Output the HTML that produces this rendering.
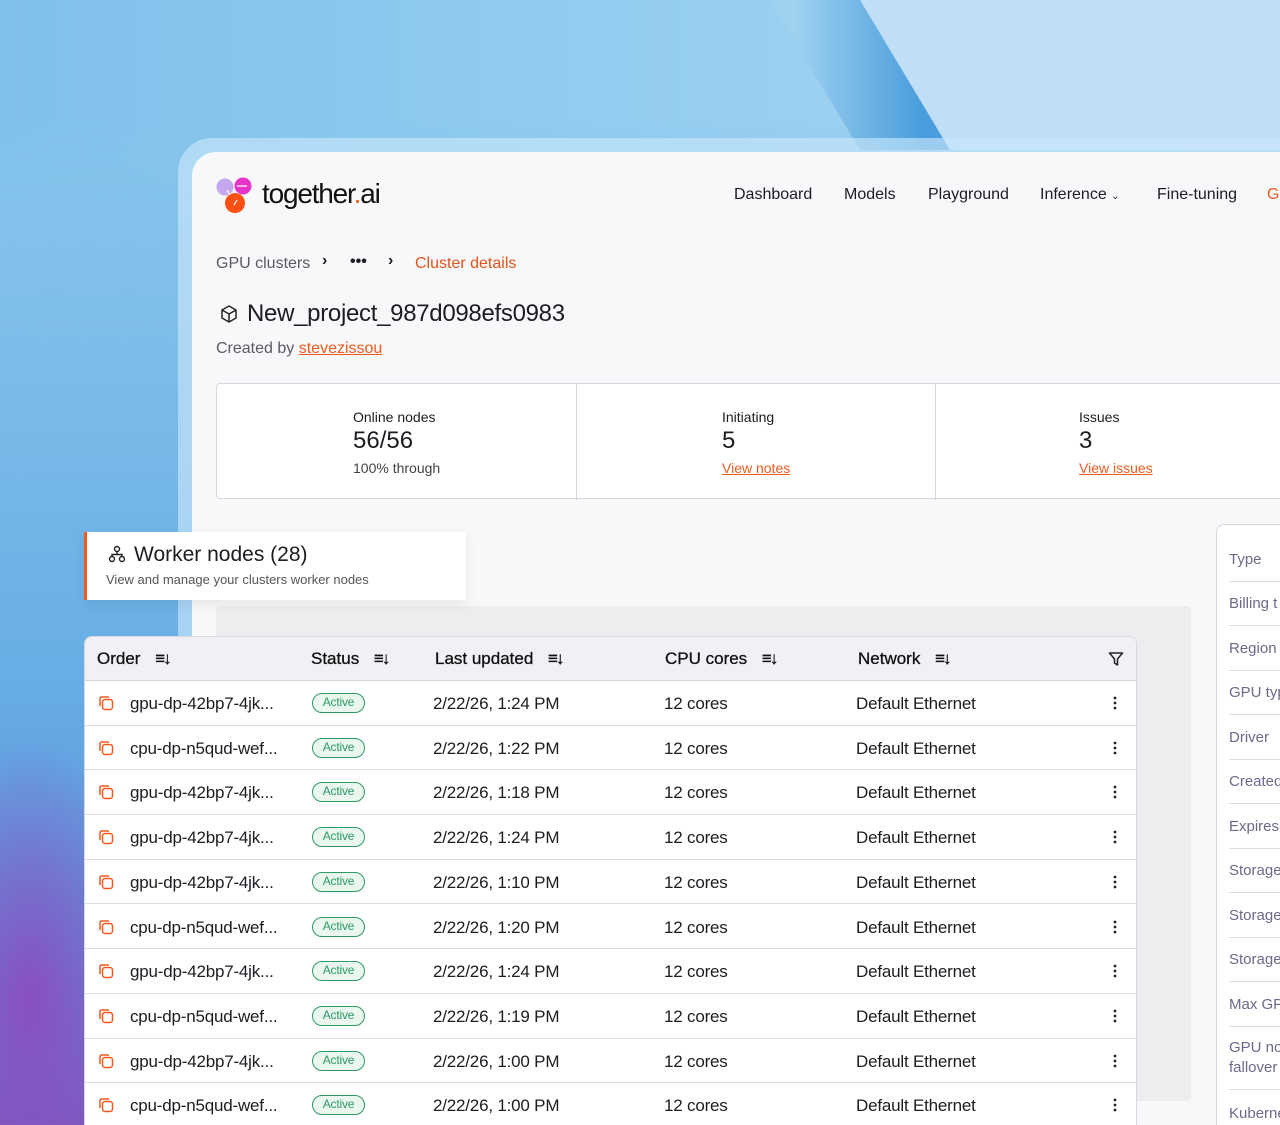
<!DOCTYPE html>
<html style="width:1280px;height:1125px;overflow:hidden"><head><meta charset="utf-8"><style>
*{box-sizing:border-box;margin:0;padding:0}
body{width:1280px;height:1125px;overflow:hidden;position:relative;font-family:"Liberation Sans",sans-serif;color:#1c1c22;
background:linear-gradient(180deg,#8ccbee 0%,#7dbde9 30%,#67aee6 60%,#5b8fd8 85%,#7a5cc0 100%);}
.bg2{position:absolute;left:0;top:0;width:1280px;height:1125px;background:radial-gradient(ellipse 120px 260px at 30px 1000px,#8a4fc0 0%,rgba(138,79,192,0) 100%);}
.sky{position:absolute;left:0;top:0;width:1280px;height:200px;background:linear-gradient(90deg,#7fc0ea 0%,#95cdef 50%,#aad6f2 100%);-webkit-mask-image:linear-gradient(180deg,#000 60%,transparent 100%);mask-image:linear-gradient(180deg,#000 60%,transparent 100%)}
.right{position:absolute;left:0;top:0;width:1280px;height:150px;background:#c0dff6;clip-path:polygon(860px 0,1280px 0,1280px 150px,950px 150px)}
.band{position:absolute;left:0;top:0;width:1280px;height:150px;background:linear-gradient(90deg,#9fd2f0 62%,#4a9ddc 72%);clip-path:polygon(770px 0,860px 0,950px 150px,860px 150px)}
.frame{position:absolute;left:178px;top:138px;width:1102px;height:987px;border-radius:34px 0 0 0;background:rgba(200,230,250,.65)}
.panel{position:absolute;left:192px;top:152px;width:1088px;height:973px;border-radius:24px 0 0 0;background:#f7f8fa}
.a{position:absolute;white-space:nowrap}
.nav{font-size:16px;top:186px;color:#1c1c22}
.stats{position:absolute;left:216px;top:383px;width:1100px;height:116px;border:1px solid #d6d8de;background:#fff;border-radius:4px}
.stats .d{position:absolute;top:0;width:1px;height:116px;background:#d6d8de}
.gray{position:absolute;left:216px;top:606px;width:975px;height:495px;background:#ededef;border-radius:4px}
.card{position:absolute;left:84px;top:532px;width:382px;height:68px;background:#fff;border-left:3px solid #f05a1e;box-shadow:0 4px 12px rgba(0,0,0,.08)}
.table{position:absolute;left:84px;top:636px;width:1053px;height:489px;background:#fff;border:1px solid #d6d8de;border-bottom:none;border-radius:8px 8px 0 0;overflow:hidden}
.th{position:absolute;top:0;left:0;width:100%;height:44px;background:#eff1f5;border-bottom:1px solid #d6d8de}
.th span{position:absolute;top:12px;font-size:17px;color:#111;-webkit-text-stroke:.3px #111}
.row{position:absolute;left:0;width:100%;height:44.7px;border-bottom:1.5px solid #dcdee4;font-size:17px;letter-spacing:-.2px}
.row span{position:absolute;top:13px}
.badge{position:absolute;left:227px;top:12px;width:53px;height:20px;border:1.5px solid #2e9a64;border-radius:10px;background:#e9f7ef;color:#2e9a64;font-size:12px;text-align:center;line-height:17px}
.side{position:absolute;left:1216px;top:524px;width:80px;height:620px;background:#fff;border:1px solid #d6d8de;border-radius:8px}
.side div{position:absolute;left:12px;width:70px;font-size:15px;color:#6b6a8a;border-bottom:1.5px solid #dcdee4;height:44.5px;padding-top:14px}
.so{font-size:13px;font-weight:bold;letter-spacing:-2px}
</style></head><body>
<div class="sky"></div><div class="right"></div><div class="band"></div><div class="bg2"></div>
<div class="frame"></div><div class="panel"></div>
<svg class="a" style="left:215px;top:176px" width="42" height="38" viewBox="0 0 42 38"><circle cx="10" cy="11" r="8.5" fill="#c4a7ee"/><circle cx="28" cy="10" r="8.5" fill="#e635c8"/><circle cx="20" cy="27" r="10" fill="#fb4f14"/><path d="M22 10h10M12 14l3 5M22 24l-3 5" stroke="#fff" stroke-width="1.2"/></svg>
<div class="a" style="left:262px;top:178px;font-size:28px;letter-spacing:-1.2px;color:#111">together<span style="color:#f05a1e">.</span>ai</div>
<div class="a nav" style="left:734px">Dashboard</div>
<div class="a nav" style="left:844px">Models</div>
<div class="a nav" style="left:928px">Playground</div>
<div class="a nav" style="left:1040px">Inference <span style="font-size:10px">⌄</span></div>
<div class="a nav" style="left:1157px">Fine-tuning</div>
<div class="a nav" style="left:1267px;color:#f05a1e">G</div>
<div class="a" style="left:216px;top:255px;font-size:16px;color:#5a5a66">GPU clusters</div>
<div class="a" style="left:322px;top:252px;font-size:16px;font-weight:bold">›</div>
<div class="a" style="left:350px;top:253px;font-size:16px;font-weight:bold">•••</div>
<div class="a" style="left:388px;top:252px;font-size:16px;font-weight:bold">›</div>
<div class="a" style="left:415px;top:255px;font-size:16px;color:#e2541a">Cluster details</div>
<svg class="a" style="left:219px;top:304px" width="20" height="20" viewBox="0 0 20 20" fill="none" stroke="#222" stroke-width="1.5" stroke-linejoin="round"><path d="M10 2l7 4v8l-7 4-7-4V6z M3 6l7 4 7-4 M10 10v8"/></svg>
<div class="a" style="left:247px;top:300px;font-size:24px;letter-spacing:-.3px">New_project_987d098efs0983</div>
<div class="a" style="left:216px;top:340px;font-size:16px;color:#5a5a66">Created by <span style="color:#f05a1e;text-decoration:underline">stevezissou</span></div>
<div class="stats"><div class="d" style="left:359px"></div><div class="d" style="left:718px"></div>
<div class="a" style="left:136px;top:25px;font-size:14px">Online nodes</div>
<div class="a" style="left:136px;top:43px;font-size:24px">56/56</div>
<div class="a" style="left:136px;top:76px;font-size:14px;color:#444">100% through</div>
<div class="a" style="left:505px;top:25px;font-size:14px">Initiating</div>
<div class="a" style="left:505px;top:43px;font-size:24px">5</div>
<div class="a" style="left:505px;top:76px;font-size:14px;color:#f05a1e;text-decoration:underline">View notes</div>
<div class="a" style="left:862px;top:25px;font-size:14px">Issues</div>
<div class="a" style="left:862px;top:43px;font-size:24px">3</div>
<div class="a" style="left:862px;top:76px;font-size:14px;color:#f05a1e;text-decoration:underline">View issues</div>
</div>
<div class="gray"></div>
<div class="side">
<div style="top:12px">Type</div><div style="top:56px">Billing t</div><div style="top:101px">Region</div><div style="top:145px">GPU typ</div><div style="top:190px">Driver</div><div style="top:234px">Created</div><div style="top:279px">Expires</div><div style="top:323px">Storage</div><div style="top:368px">Storage</div><div style="top:412px">Storage</div><div style="top:457px">Max GP</div><div style="top:501px;height:64px;line-height:20px;padding-top:12px">GPU no fallover</div><div style="top:566px">Kuberne</div>
</div>
<div class="card">
<svg class="a" style="left:21px;top:13px" width="18" height="18" viewBox="0 0 18 18" fill="none" stroke="#222" stroke-width="1.4"><circle cx="9" cy="4" r="2.5"/><circle cx="4" cy="14" r="2.5"/><circle cx="14" cy="14" r="2.5"/><path d="M9 6.5v3M4 11.5V9.5h10v2"/></svg>
<div class="a" style="left:47px;top:11px;font-size:21px">Worker nodes (28)</div>
<div class="a" style="left:19px;top:40px;font-size:13px;color:#555">View and manage your clusters worker nodes</div>
</div>
<div class="table">
<div class="th"><span style="left:12px">Order <span class="so" style="position:static;margin-left:10px">≡↓</span></span>
<span style="left:226px">Status <span class="so" style="position:static;margin-left:10px">≡↓</span></span>
<span style="left:350px">Last updated <span class="so" style="position:static;margin-left:10px">≡↓</span></span>
<span style="left:580px">CPU cores <span class="so" style="position:static;margin-left:10px">≡↓</span></span>
<span style="left:773px">Network <span class="so" style="position:static;margin-left:10px">≡↓</span></span>
<svg style="position:absolute;left:1023px;top:14px" width="16" height="16" viewBox="0 0 16 16" fill="none" stroke="#222" stroke-width="1.5" stroke-linejoin="round"><path d="M1.5 2h13l-5 6v6l-3-2V8z"/></svg>
</div>
<div id="rows"></div>
</div>
<script>
var d=[["gpu-dp-42bp7-4jk...","1:24"],["cpu-dp-n5qud-wef...","1:22"],["gpu-dp-42bp7-4jk...","1:18"],["gpu-dp-42bp7-4jk...","1:24"],["gpu-dp-42bp7-4jk...","1:10"],["cpu-dp-n5qud-wef...","1:20"],["gpu-dp-42bp7-4jk...","1:24"],["cpu-dp-n5qud-wef...","1:19"],["gpu-dp-42bp7-4jk...","1:00"],["cpu-dp-n5qud-wef...","1:00"]];
var h="";d.forEach(function(r,i){h+='<div class="row" style="top:'+(44+i*44.7)+'px"><svg style="position:absolute;left:13px;top:14px" width="16" height="16" viewBox="0 0 16 16" fill="none" stroke="#f05a1e" stroke-width="1.5"><rect x="4.5" y="4.5" width="10" height="10" rx="2.5"/><path d="M2 11V3.5A1.5 1.5 0 0 1 3.5 2H11"/></svg><span style="left:45px">'+r[0]+'</span><div class="badge">Active</div><span style="left:348px">2/22/26, '+r[1]+' PM</span><span style="left:579px">12 cores</span><span style="left:771px">Default Ethernet</span><svg style="position:absolute;left:1028px;top:15px" width="4" height="14"><circle cx="2" cy="2" r="1.4" fill="#222"/><circle cx="2" cy="7" r="1.4" fill="#222"/><circle cx="2" cy="12" r="1.4" fill="#222"/></svg></div>'});
document.getElementById("rows").innerHTML=h;
</script>
</body></html>
